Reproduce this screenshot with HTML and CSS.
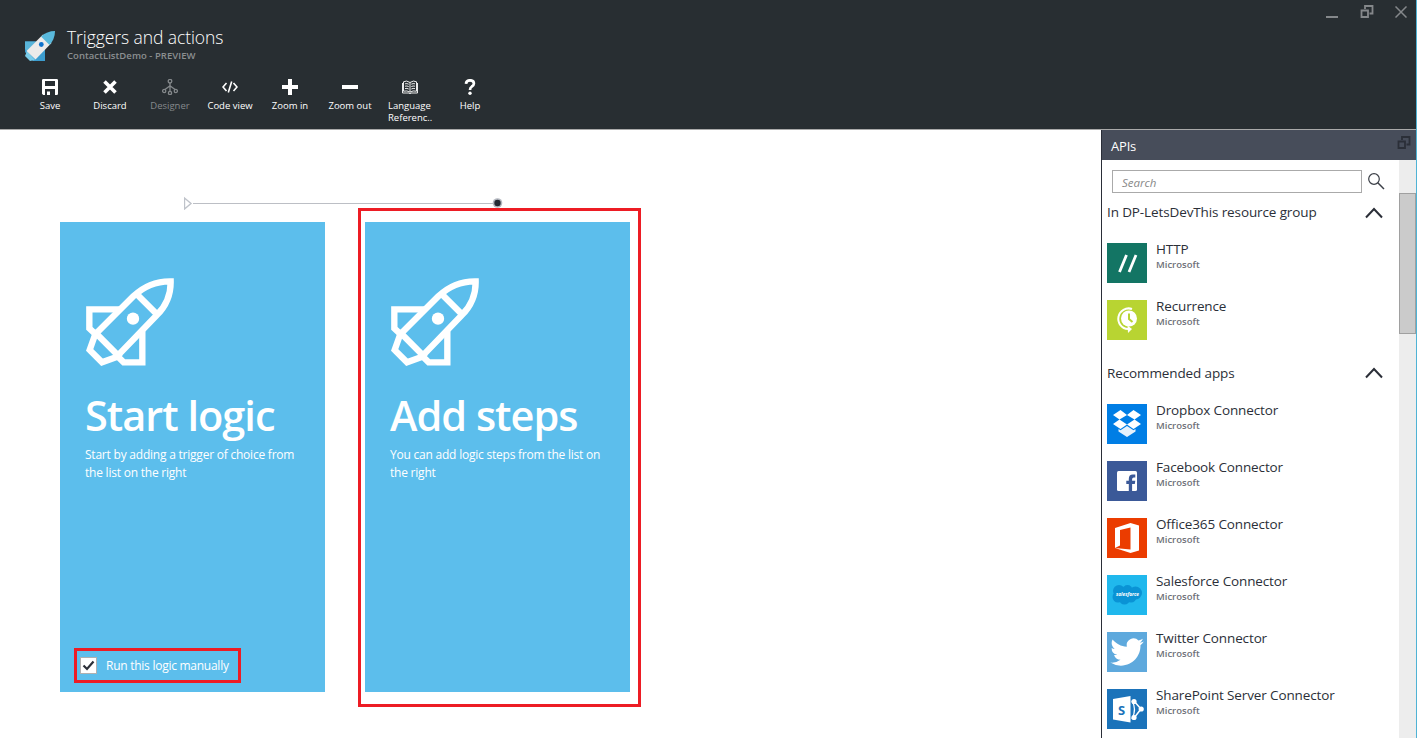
FILE: index.html
```html
<!DOCTYPE html>
<html lang="en">
<head>
<meta charset="utf-8">
<title>Triggers and actions</title>
<link rel="stylesheet" href="styles.css">
</head>
<body>
<svg class="defs" width="0" height="0">
  <symbol id="rocket" viewBox="0 0 264 264">
    <g fill="none" stroke="#fff" stroke-width="19" stroke-miterlimit="8">
      <path d="M28 169 L142 55 Q190 9 254 10 Q255 70 212 112 L96 232"/>
      <path d="M24 160 L103 239 M151 47 L218 114"/>
      <path d="M100 94 H10 V151 L32 172"/>
      <path d="M169 160 V253 H113 L93 233"/>
      <path d="M28 168 L11 216 L48 253 L94 236"/>
    </g>
    <circle cx="141" cy="122" r="18.5" fill="#fff"/>
  </symbol>
  <symbol id="windows" viewBox="0 0 14 14">
    <path d="M5 4V1h7.500v7.500H9.500M1.500 5.500H8v6.500H1.500z" fill="none" stroke="currentColor" stroke-width="1.800"/>
  </symbol>
  <symbol id="chevron" viewBox="0 0 18 12">
    <path d="M1 10.500L9 2l8 8.500" fill="none" stroke="#2b2f38" stroke-width="2"/>
  </symbol>
</svg>
<div class="blade">
  <header class="top">
    <div class="titlebar">
      <svg class="logo" viewBox="0 0 30 30">
        <path d="M0 10.500H11L20 19V30H8L0 21z" fill="#3c9dcf"/>
        <path d="M0 10.500H11L2 20L0 18z" fill="#59b4d9"/>
        <path d="M2 20L10 29L5 30L0 25z" fill="#7accea"/>
        <path d="M1.500 20L18 3.500L26.500 12L10.500 28.500z" fill="#ecebea"/>
        <path d="M16 5.500Q22 0 30 0Q30 8 24.500 14z" fill="#59b9dc"/>
        <circle cx="16.300" cy="13.500" r="2.400" fill="#0e72cc"/>
      </svg>
      <div class="titles">
        <h1 class="title">Triggers and actions</h1>
        <div class="subtitle">ContactListDemo - PREVIEW</div>
      </div>
      <div class="controls">
        <svg class="ctl-min" viewBox="0 0 12 2"><path d="M0 1H12" stroke="#85888b" stroke-width="2"/></svg>
        <svg class="ctl-win"><use href="#windows"/></svg>
        <svg class="ctl-close" viewBox="0 0 12 12"><path d="M.5.500l11 11M11.500.500l-11 11" stroke="#85888b" stroke-width="1.500"/></svg>
      </div>
    </div>
    <nav class="toolbar">
      <div class="tool"><svg viewBox="0 0 16 16"><path d="M1.200 0H14.800Q16 0 16 1.200V14.800Q16 16 14.800 16H1.200L0 14.800V1.200Q0 0 1.200 0zM3 2V7H13V2zM3 10V16H5V12.500H8V16H13V10z" fill="#fff" fill-rule="evenodd"/></svg><span>Save</span></div>
      <div class="tool"><svg viewBox="0 0 16 16"><path d="M2.500 2.500L13.500 13.500M13.500 2.500L2.500 13.500" stroke="#fff" stroke-width="3.600"/></svg><span>Discard</span></div>
      <div class="tool dim"><svg viewBox="0 0 16 16"><g fill="none" stroke="#85898c" stroke-width="1.300"><circle cx="8" cy="2.200" r="1.800"/><circle cx="2.200" cy="12" r="1.600"/><circle cx="8" cy="14" r="1.600"/><circle cx="13.800" cy="12" r="1.600"/><path d="M8 4V12.400M7.700 7L3 10.500M8.300 7L13 10.500"/></g></svg><span>Designer</span></div>
      <div class="tool"><svg viewBox="0 0 16 16"><path d="M4.500 4L1 8l3.500 4M11.500 4L15 8l-3.500 4M9.700 2.500L6.300 13.500" fill="none" stroke="#fff" stroke-width="1.600"/></svg><span>Code view</span></div>
      <div class="tool"><svg viewBox="0 0 16 16"><path d="M0 8H16M8 0V16" stroke="#fff" stroke-width="4"/></svg><span>Zoom in</span></div>
      <div class="tool"><svg viewBox="0 0 16 16"><path d="M0 8H16" stroke="#fff" stroke-width="4"/></svg><span>Zoom out</span></div>
      <div class="tool wrap"><svg viewBox="0 0 16 16"><path d="M8 3.500Q4.500 1 1.500 2.800V12.200Q5 11.200 8 13.200Q11 11.200 14.500 12.200V2.800Q11.500 1 8 3.500zV13M.5 4V14H7L8 14.800L9 14H15.500V4M3 4.800Q5 4.200 6.700 5.200M3 7.200Q5 6.600 6.700 7.600M3 9.600Q5 9 6.700 10M13 4.800Q11 4.200 9.300 5.200M13 7.200Q11 6.600 9.300 7.600M13 9.600Q11 9 9.300 10" fill="none" stroke="#fff" stroke-width=".9"/></svg><span>Language Referenc..</span></div>
      <div class="tool"><svg viewBox="0 0 16 16"><path d="M4 4.800Q4.200 1.300 8 1.300Q11.900 1.300 11.900 4.500Q11.900 6.200 9.800 7.500Q8 8.700 8 11" fill="none" stroke="#fff" stroke-width="2.700"/><circle cx="8" cy="14.300" r="1.700" fill="#fff"/></svg><span>Help</span></div>
    </nav>
  </header>
  <div class="main">
    <main class="canvas">
      <svg class="connector" viewBox="0 0 320 14">
        <path d="M.5 2V13L7 7.500z" fill="none" stroke="#bfc3ca" stroke-width="1.400"/>
        <path d="M9 7.500H311" stroke="#bcbfc5"/>
        <circle cx="313.500" cy="7" r="4.800" fill="#b4b8c0"/><circle cx="313.500" cy="7" r="3.200" fill="#252b35"/>
      </svg>
      <div class="cards">
        <section class="card">
          <svg class="rocket"><use href="#rocket"/></svg>
          <h2 class="card-title">Start logic</h2>
          <p class="card-text">Start by adding a trigger of choice from<br>the list on the right</p>
          <div class="manual">
            <svg class="check" viewBox="0 0 17 17"><rect x=".5" y=".5" width="16" height="16" fill="#fff" stroke="#b0b0b0"/><path d="M3.500 8.500L7 12L13.500 4.500" fill="none" stroke="#2b2f38" stroke-width="2.200"/></svg>
            <span>Run this logic manually</span>
          </div>
        </section>
        <section class="card steps">
          <svg class="rocket"><use href="#rocket"/></svg>
          <h2 class="card-title">Add steps</h2>
          <p class="card-text">You can add logic steps from the list on<br>the right</p>
        </section>
      </div>
    </main>
    <aside class="panel">
      <div class="panel-head"><span>APIs</span><svg class="panel-win"><use href="#windows"/></svg></div>
      <div class="panel-body">
        <div class="list">
          <div class="search"><div class="field">Search</div><svg class="lens" viewBox="0 0 17 17"><circle cx="6" cy="6" r="5.300" fill="none" stroke="#3b3f47" stroke-width="1.200"/><path d="M9.800 9.800L16 16" stroke="#3b3f47" stroke-width="1.500"/></svg></div>
          <div class="group"><span>In DP-LetsDevThis resource group</span><svg class="chev"><use href="#chevron"/></svg></div>
          <div class="items">
            <div class="item"><svg viewBox="0 0 40 40"><rect width="40" height="40" fill="#137564"/><path d="M12.500 29L19.500 12M22 29L29 12" stroke="#fff" stroke-width="2.800"/></svg><div><b>HTTP</b><small>Microsoft</small></div></div>
            <div class="item"><svg viewBox="0 0 40 40"><rect width="40" height="40" fill="#b8d432"/><circle cx="22" cy="18.500" r="8" fill="#fff"/><path d="M22 13.500V19L25.500 22" fill="none" stroke="#b8d432" stroke-width="2"/><path d="M25 9A10.300 10.300 0 1 0 21 29" fill="none" stroke="#fff" stroke-width="2"/><path d="M20.500 25.500L25 29L21 33z" fill="#fff"/></svg><div><b>Recurrence</b><small>Microsoft</small></div></div>
          </div>
          <div class="group second-group"><span>Recommended apps</span><svg class="chev"><use href="#chevron"/></svg></div>
          <div class="items">
            <div class="item"><svg viewBox="0 0 40 40"><rect width="40" height="40" fill="#007ee5"/><path d="M13.500 6L20 11L12.500 15.500L6 11zM26.500 6L34 11L27.500 15.500L20 11zM6 20L12.500 15.500L20 20.500L13.500 25zM34 20L27.500 15.500L20 20.500L26.500 25z" fill="#fff"/><path d="M11.500 25L13.500 26.200L20 22L26.500 26.200L28.500 25V27.500L20 33L11.500 27.500z" fill="#e7f2fc"/></svg><div><b>Dropbox Connector</b><small>Microsoft</small></div></div>
            <div class="item"><svg viewBox="0 0 40 40"><rect width="40" height="40" fill="#3b5998"/><rect x="10" y="10" width="20" height="20" rx="1.500" fill="#fff"/><path transform="translate(.8 0)" d="M21 30V23H18.500V19.800H21V18Q21 13.600 25 13.600H27.500V16.600H26Q24.300 16.600 24.300 18.300V19.800H27.500L27 23H24.300V30z" fill="#3b5998"/></svg><div><b>Facebook Connector</b><small>Microsoft</small></div></div>
            <div class="item"><svg viewBox="0 0 40 40"><rect width="40" height="40" fill="#eb3c00"/><path d="M8 10L23.500 5L32 7.500V32.500L23.500 35L8 30L23.500 31.500V9.500L13 12V27.500L8 30z" fill="#fff"/></svg><div><b>Office365 Connector</b><small>Microsoft</small></div></div>
            <div class="item"><svg viewBox="0 0 40 40"><rect width="40" height="40" fill="#20b8ed"/><g fill="#0a93d5"><circle cx="12" cy="16" r="6"/><circle cx="20.500" cy="15" r="5"/><circle cx="28.500" cy="18" r="6.500"/><circle cx="11" cy="22" r="5.500"/><circle cx="17.500" cy="24" r="5.500"/><circle cx="24" cy="22" r="5.500"/></g><text x="9" y="21" class="sf" textLength="23" lengthAdjust="spacingAndGlyphs">salesforce</text></svg><div><b>Salesforce Connector</b><small>Microsoft</small></div></div>
            <div class="item"><svg viewBox="0 0 40 40"><rect width="40" height="40" fill="#5ea9dd"/><path transform="translate(3.300 3.200) scale(1.400)" d="M23.950 4.570a10 10 0 0 1-2.820.770 4.960 4.960 0 0 0 2.160-2.720c-.950.550-2 .960-3.130 1.180a4.920 4.920 0 0 0-8.380 4.480C7.690 8.100 4.070 6.130 1.640 3.160a4.820 4.820 0 0 0-.670 2.480c0 1.710.870 3.210 2.190 4.100a4.900 4.900 0 0 1-2.230-.620v.060a4.920 4.920 0 0 0 3.950 4.830 5 5 0 0 1-2.210.080 4.940 4.940 0 0 0 4.600 3.420A9.870 9.870 0 0 1 0 19.540a14 14 0 0 0 7.550 2.210c9.050 0 14-7.500 14-13.980 0-.210 0-.420-.020-.630a9.940 9.940 0 0 0 2.420-2.570z" fill="#fff"/></svg><div><b>Twitter Connector</b><small>Microsoft</small></div></div>
            <div class="item"><svg viewBox="0 0 40 40"><rect width="40" height="40" fill="#1b73ba"/><path d="M27 12L34 20L27 29" fill="none" stroke="#fff" stroke-width="1.500"/><path d="M25 12Q30 20 25 30" fill="none" stroke="#fff" stroke-width="1.200"/><circle cx="27" cy="12.500" r="2.600" fill="#fff"/><circle cx="34.200" cy="20" r="2.600" fill="#fff"/><circle cx="27" cy="28.500" r="2.600" fill="#fff"/><path d="M6 10L23.500 7V33.500L6 30.500z" fill="#fff"/><text x="11" y="25.500" class="sp">S</text></svg><div><b>SharePoint Server Connector</b><small>Microsoft</small></div></div>
          </div>
        </div>
        <div class="scroll"><div class="thumb"></div></div>
      </div>
    </aside>
  </div>
</div>
</body>
</html>
```
FILE: styles.css
```css
* { box-sizing: border-box; }
body { margin: 0; font-family: "Open Sans", "Noto Sans", sans-serif; }
h1, h2, p { margin: 0; }
svg { display: block; flex: none; }
.defs { display: none; }
.blade { width: 1417px; height: 738px; overflow: hidden; border-right: 1px solid #4fb3d5; background: #fff; display: flex; flex-direction: column; }

.top { height: 130px; flex: none; background: #282e32; border-bottom: 1px solid #aaa; }
.titlebar { display: flex; height: 79px; padding-left: 25px; }
.logo { width: 30px; height: 30px; margin-top: 31px; }
.titles { margin: 26px 0 0 12px; flex: 1; white-space: nowrap; }
.title { font-size: 17.500px; line-height: 23px; letter-spacing: -.08px; font-weight: 300; color: #fff; }
.subtitle { font-size: 9.500px; line-height: 14px; letter-spacing: .05px; font-weight: 600; color: #8b8f91; }
.controls { display: flex; padding-right: 9px; color: #85888b; }
.ctl-min { width: 12px; height: 2px; margin: 16px 22px 0 0; }
.ctl-win { width: 14px; height: 14px; margin: 5px 21px 0 0; }
.ctl-close { width: 12px; height: 12px; margin-top: 6px; }
.toolbar { display: flex; padding-left: 20px; }
.tool { width: 60px; display: flex; flex-direction: column; align-items: center; gap: 5px; color: #fff; font-size: 9.500px; line-height: 12px; white-space: nowrap; }
.tool svg { width: 16px; height: 16px; }
.wrap span { width: 44px; white-space: normal; }
.dim { color: #85898c; }

.main { flex: 1; min-height: 0; display: flex; }
.canvas { flex: 1; padding: 66px 0 0 60px; }
.connector { width: 320px; height: 14px; margin-left: 124px; }
.cards { display: flex; gap: 40px; padding-top: 12px; }
.card { position: relative; width: 265px; height: 470px; padding: 56px 0 0 25px; background: #5cbeec; color: #fff; display: flex; flex-direction: column; align-items: flex-start; white-space: nowrap; }
.steps::after { content: ""; position: absolute; inset: -14px -11px -15px -7px; border: 3px solid #ed1c24; }
.rocket { width: 88px; height: 88px; margin-left: 1px; }
.card-title { margin-top: 19px; font-size: 41.500px; line-height: 60px; letter-spacing: -1px; font-weight: 600; }
.card-text { margin-top: 1px; font-size: 12px; line-height: 18px; letter-spacing: -.22px; }
.manual { display: flex; align-items: center; gap: 9px; width: 167px; height: 35px; margin: auto 0 9px -11px; padding-left: 3px; border: 3px solid #ed1c24; font-size: 12px; letter-spacing: -.26px; }
.check { width: 17px; height: 17px; }

.panel { width: 315px; border-left: 1px solid #2a2e38; display: flex; flex-direction: column; color: #2b2f38; }
.panel-head { height: 30px; display: flex; justify-content: space-between; padding: 6px 5px 0 9px; background: #474d5a; color: #fff; font-size: 13px; line-height: 20px; letter-spacing: -.2px; }
.panel-win { width: 14px; height: 14px; color: #2b2f38; }
.panel-body { flex: 1; min-height: 0; display: flex; }
.list { flex: 1; padding: 10px 0 0 5px; }
.search { display: flex; padding-left: 5px; gap: 6px; }
.field { width: 250px; height: 23px; border: 1px solid #aaa; padding-left: 9px; font-size: 11.500px; line-height: 23px; font-style: italic; color: #888; }
.lens { width: 17px; height: 17px; margin-top: 3px; }
.group { display: flex; justify-content: space-between; align-items: center; height: 20px; margin-top: 9px; padding-right: 16px; font-size: 13.500px; letter-spacing: -.12px; white-space: nowrap; }
.chev { width: 18px; height: 12px; margin-top: 1px; }
.items { padding-top: 21px; }
.item { display: flex; gap: 9px; height: 57px; white-space: nowrap; }
.item > svg { width: 40px; height: 40px; }
.item b { display: block; font-size: 13.500px; line-height: 16px; margin-top: -2px; letter-spacing: -.13px; font-weight: 400; }
.item small { display: block; font-size: 9.500px; line-height: 15px; font-weight: 600; color: #6d7077; }
.second-group { margin-top: 6px; }
.second-group .chev { margin-top: 0; }
.sf { font-size: 6px; font-style: italic; font-weight: 700; fill: #fff; }
.sp { font-size: 13px; font-weight: 700; fill: #1b73ba; }
.scroll { width: 17px; background: #ededed; padding-top: 33px; }
.thumb { height: 141px; background: #cbcbcb; border: 1px solid #a0a0a0; }
```
